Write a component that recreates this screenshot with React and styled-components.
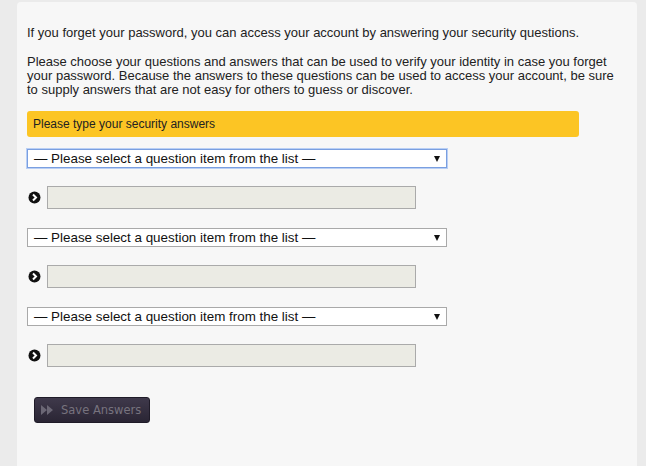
import React, { useState } from "react";
import styled, { createGlobalStyle } from "styled-components";

const GlobalStyle = createGlobalStyle`
   html, body {
      margin: 0;
      padding: 0;
      background: #ebebeb;
      font-family: Arial, "Liberation Sans", sans-serif;
   }
`;

const Page = styled.div`
   width: 646px;
   height: 466px;
   padding: 2px 9px 0 17px;
   box-sizing: border-box;
   overflow: hidden;
`;

const Panel = styled.div`
   background: #f7f7f7;
   border-radius: 4px 4px 0 0;
   height: 100%;
   padding: 24px 10px 0 10px;
   box-sizing: border-box;
`;

const Text = styled.p`
   margin: 0 0 15px;
   font-size: 13px;
   line-height: 14px;
   color: #222;

   &:last-of-type {
      margin-bottom: 0;
   }
`;

const Notice = styled.div`
   width: 552px;
   height: 26px;
   margin-top: 14px;
   box-sizing: border-box;
   padding: 0 6px;
   display: flex;
   align-items: center;
   background: #fcc524;
   border-radius: 3px;
   font-size: 12px;
   color: #222;
`;

const Form = styled.div`
   display: flex;
   flex-direction: column;
   margin-top: 12px;
`;

const Group = styled.div`
   display: flex;
   flex-direction: column;
   gap: 18px;
   margin-bottom: 19px;
`;

const SelectBox = styled.div`
   width: 420px;
   height: 19px;
   box-sizing: border-box;
   border: 1px solid ${({ $focused }) => ($focused ? "#7a9fe0" : "#a9a9a9")};
   box-shadow: ${({ $focused }) => ($focused ? "0 0 0 1px #b9cff5" : "none")};
   background: #fff;
   display: flex;
   align-items: center;
   justify-content: space-between;
   padding: 0 6px 0 6px;
   font-size: 13.4px;
   color: #111;
   white-space: nowrap;
`;

const Caret = styled.span`
   width: 0;
   height: 0;
   border-left: 3px solid transparent;
   border-right: 3px solid transparent;
   border-top: 6px solid #111;
`;

const AnswerRow = styled.div`
   display: flex;
   align-items: center;
   gap: 6px;
   padding-left: 1px;
`;

const AnswerInput = styled.input`
   width: 369px;
   height: 23px;
   box-sizing: border-box;
   border: 1px solid #aaa;
   background: #ebebe4;
   margin: 0;
   padding: 0 4px;
`;

const SaveButton = styled.button`
   margin: 11px 0 0 7px;
   width: 116px;
   height: 26px;
   border: 1px solid #1f1b28;
   border-radius: 3px;
   background: linear-gradient(#3f394b, #2a2534);
   color: #77737e;
   font-family: "DejaVu Sans", Tahoma, sans-serif;
   font-size: 11.5px;
   white-space: nowrap;
   display: flex;
   align-items: center;
   gap: 8px;
   padding: 0 6px;
   cursor: default;
`;

const ArrowIcon = () => (
   <svg width="13" height="13" viewBox="0 0 13 13">
      <circle cx="6.5" cy="6.5" r="6" fill="#111" />
      <path d="M5 3.5 L8 6.5 L5 9.5" stroke="#fff" strokeWidth="2" fill="none" />
   </svg>
);

const ForwardIcon = () => (
   <svg width="12" height="10" viewBox="0 0 12 10">
      <path d="M0 0 L6 5 L0 10 Z M6 0 L12 5 L6 10 Z" fill="#6b6775" />
   </svg>
);

const questions = [0, 1, 2];

const App = () => {
   const [answers, setAnswers] = useState(["", "", ""]);

   return (
      <Page>
         <GlobalStyle />
         <Panel>
            <Text>
               If you forget your password, you can access your account by answering your security questions.
            </Text>
            <Text>
               Please choose your questions and answers that can be used to verify your identity in case you forget
               your password. Because the answers to these questions can be used to access your account, be sure
               to supply answers that are not easy for others to guess or discover.
            </Text>
            <Notice>Please type your security answers</Notice>
            <Form>
               {questions.map((i) => (
                  <Group key={i}>
                     <SelectBox $focused={i === 0}>
                        <span>— Please select a question item from the list —</span>
                        <Caret />
                     </SelectBox>
                     <AnswerRow>
                        <ArrowIcon />
                        <AnswerInput
                           disabled
                           value={answers[i]}
                           onChange={(e) => {
                              const next = [...answers];
                              next[i] = e.target.value;
                              setAnswers(next);
                           }}
                        />
                     </AnswerRow>
                  </Group>
               ))}
               <SaveButton>
                  <ForwardIcon />
                  Save Answers
               </SaveButton>
            </Form>
         </Panel>
      </Page>
   );
};

export default App;
